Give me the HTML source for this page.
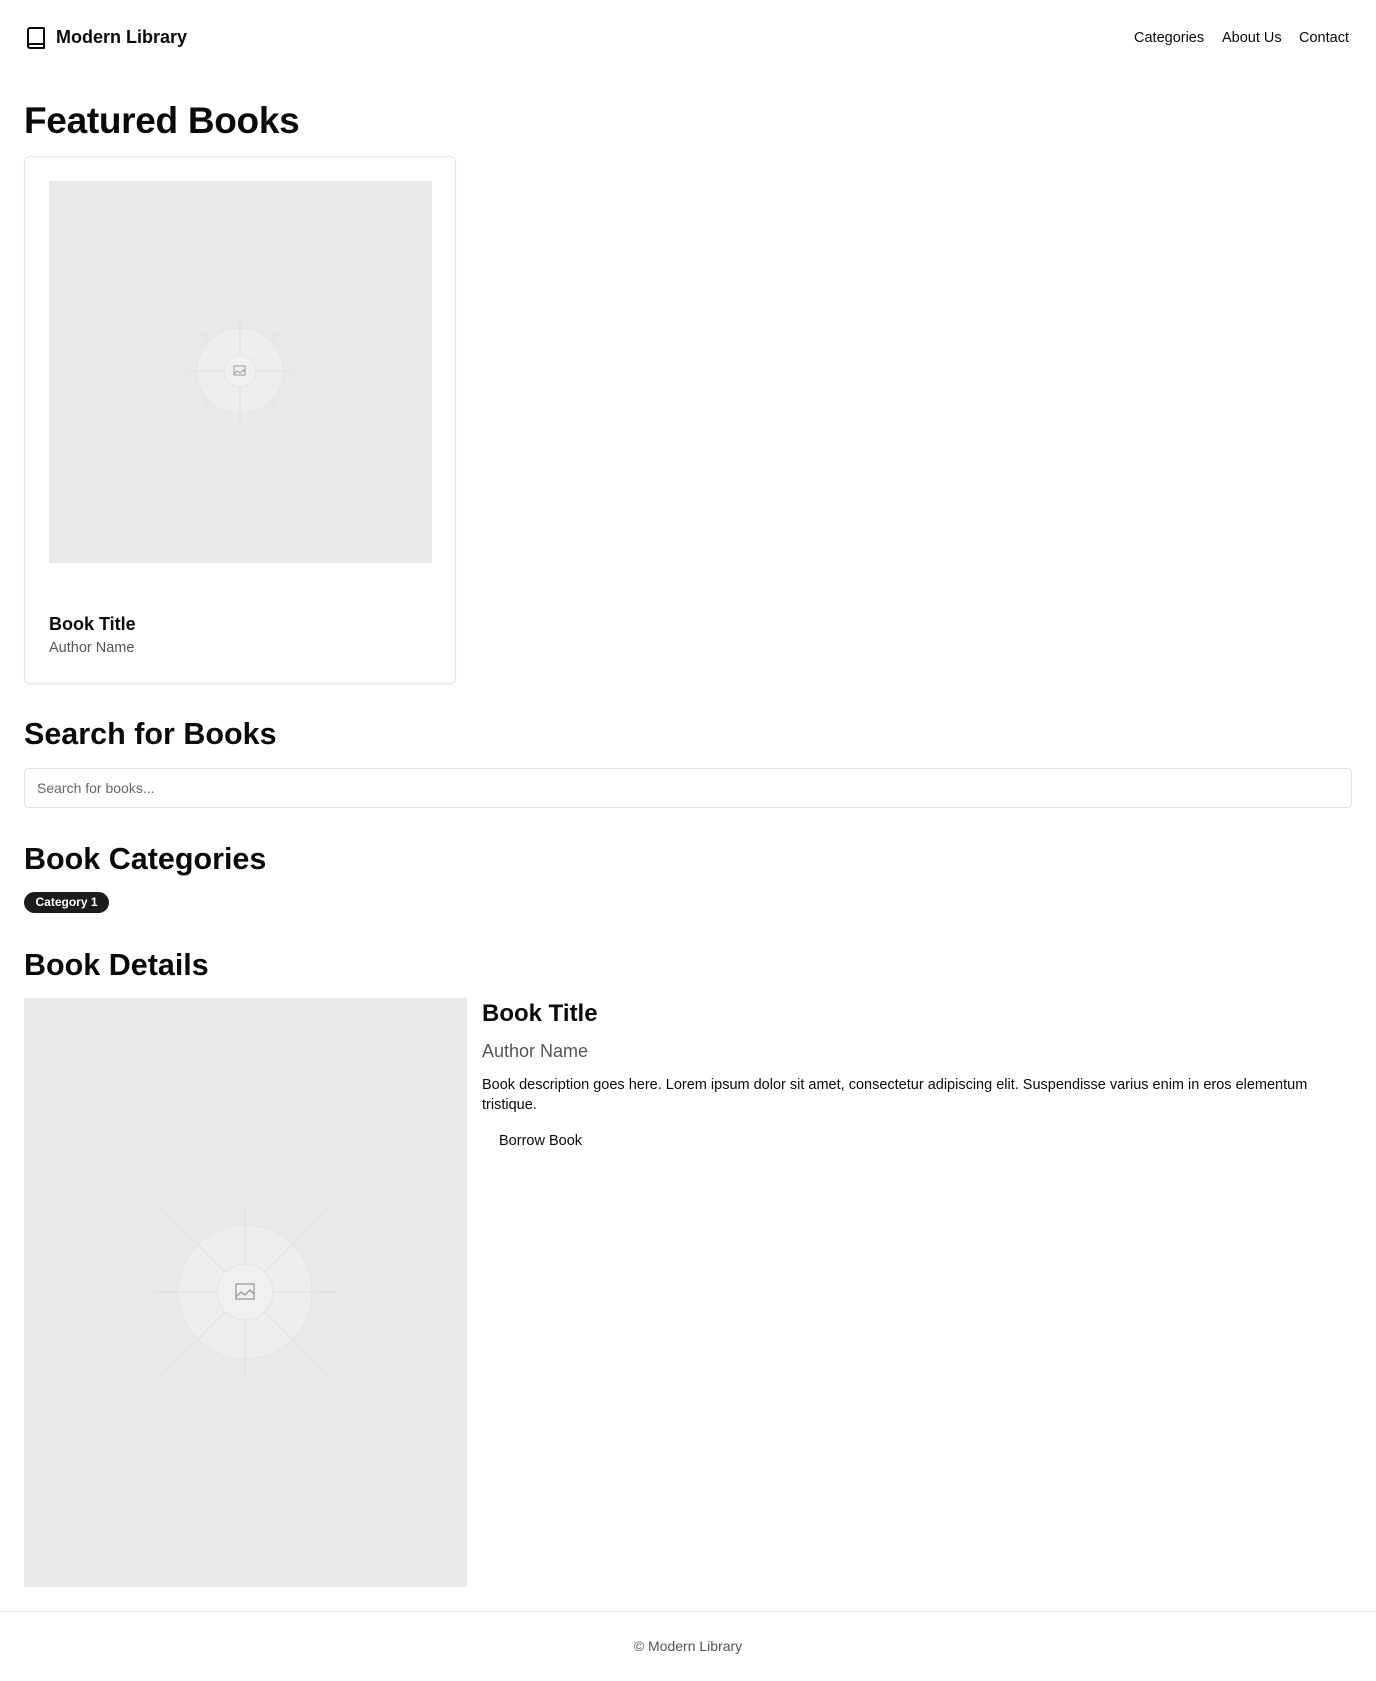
<!DOCTYPE html>
<html><head><meta charset="utf-8">
<style>
*{margin:0;padding:0;box-sizing:border-box}
html,body{width:1376px;height:1681px;background:#fff;font-family:"Liberation Sans",Arial,sans-serif;color:#0a0a0a;position:relative;overflow:hidden}
.a{position:absolute;white-space:nowrap}
h2{position:absolute;font-size:30.5px;font-weight:700;line-height:1;white-space:nowrap}
</style></head><body>
<svg class="a" style="left:25px;top:26px" width="22" height="24" viewBox="0 0 22 24"><path d="M3 21V4a2 2 0 0 1 2-2h14v20H5a2 2 0 0 1-2-2 2 2 0 0 1 2-2h14" fill="none" stroke="#0a0a0a" stroke-width="2" stroke-linejoin="round"/></svg>
<div class="a" style="left:56px;top:27px;font-size:18px;font-weight:700">Modern Library</div>
<div class="a" style="left:1134px;top:30px;font-size:14.5px">Categories</div>
<div class="a" style="left:1222px;top:30px;font-size:14.5px">About Us</div>
<div class="a" style="left:1299px;top:30px;font-size:14.5px">Contact</div>

<h2 style="left:24px;top:102px;font-size:37px;letter-spacing:-0.3px">Featured Books</h2>
<div class="a" style="left:24px;top:156px;width:432px;height:528px;border:1px solid #e5e5e5;border-radius:6px;box-shadow:0 1px 2px rgba(0,0,0,.04)"></div>
<svg class="a" style="left:49px;top:181px" width="383" height="382" viewBox="0 0 383 382">
<rect width="383" height="382" fill="#e9e9e9"/>
<g stroke="#dedede" stroke-width="1"><line x1="191" y1="138" x2="191" y2="242"/><line x1="139" y1="190" x2="243" y2="190"/><line x1="152" y1="151" x2="230" y2="229"/><line x1="230" y1="151" x2="152" y2="229"/></g>
<circle cx="191" cy="190" r="43" fill="#efefef" fill-opacity=".8" stroke="#e4e4e4"/>
<g stroke="#dedede"><line x1="191" y1="147" x2="191" y2="233"/><line x1="148" y1="190" x2="234" y2="190"/></g>
<circle cx="191" cy="190" r="16" fill="#f0f0f0" stroke="#e2e2e2"/>
<rect x="185" y="185" width="11" height="9" fill="none" stroke="#999" stroke-width="1"/><path d="M185 193l3-3 3 2 3-3 2 2" fill="none" stroke="#999"/>
</svg>
<div class="a" style="left:49px;top:614px;font-size:18px;font-weight:700">Book Title</div>
<div class="a" style="left:49px;top:640px;font-size:14.5px;color:#555">Author Name</div>

<h2 style="left:24px;top:719px">Search for Books</h2>
<div class="a" style="left:24px;top:768px;width:1328px;height:40px;border:1px solid #e3e3e3;border-radius:5px"></div>
<div class="a" style="left:37px;top:780px;font-size:14px;color:#666">Search for books...</div>

<h2 style="left:24px;top:844px">Book Categories</h2>
<div class="a" style="left:24px;top:892px;width:85px;height:21px;background:#1c1c1c;border-radius:11px;color:#fff;font-size:12px;font-weight:700;line-height:21px;text-align:center">Category 1</div>

<h2 style="left:24px;top:950px">Book Details</h2>
<svg class="a" style="left:24px;top:998px" width="443" height="589" viewBox="0 0 443 589">
<rect width="443" height="589" fill="#e9e9e9"/>
<g stroke="#dedede" stroke-width="1"><line x1="221" y1="210" x2="221" y2="378"/><line x1="130" y1="294" x2="312" y2="294"/><line x1="135" y1="208" x2="307" y2="380"/><line x1="307" y1="208" x2="135" y2="380"/></g>
<circle cx="221" cy="294" r="67" fill="#efefef" fill-opacity=".8" stroke="#e4e4e4"/>
<g stroke="#dedede"><line x1="221" y1="227" x2="221" y2="361"/><line x1="154" y1="294" x2="288" y2="294"/><line x1="174" y1="247" x2="268" y2="341"/><line x1="268" y1="247" x2="174" y2="341"/></g>
<circle cx="221" cy="294" r="28" fill="#f0f0f0" stroke="#e2e2e2"/>
<rect x="212" y="286" width="18" height="15" fill="none" stroke="#999" stroke-width="1.3"/><path d="M212 299l5-5 4 3 5-5 4 4" fill="none" stroke="#999" stroke-width="1.3"/>
</svg>
<div class="a" style="left:482px;top:1000px;font-size:24px;font-weight:700">Book Title</div>
<div class="a" style="left:482px;top:1041px;font-size:18px;color:#555">Author Name</div>
<div class="a" style="left:482px;top:1075px;font-size:14.5px;line-height:20px;white-space:normal;width:880px">Book description goes here. Lorem ipsum dolor sit amet, consectetur adipiscing elit. Suspendisse varius enim in eros elementum<br>tristique.</div>
<div class="a" style="left:499px;top:1133px;font-size:14.5px">Borrow Book</div>

<div class="a" style="left:0;top:1611px;width:1376px;height:1px;background:#e5e5e5"></div>
<div class="a" style="left:0;top:1638px;width:1376px;text-align:center;font-size:14px;color:#555">© Modern Library</div>
</body></html>
